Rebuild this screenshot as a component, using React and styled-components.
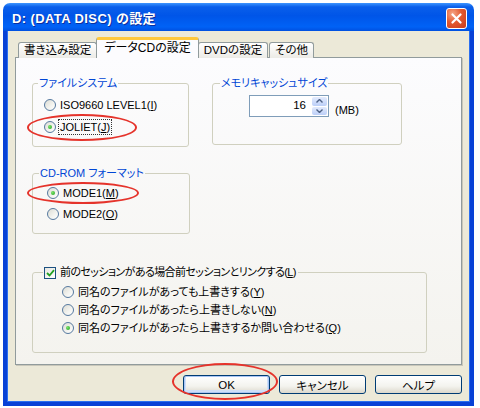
import React from 'react'
import styled, { createGlobalStyle } from 'styled-components'

const GlobalStyle = createGlobalStyle`
  html, body { margin: 0; padding: 0; background: #fff; }
  body {
    font-family: "Liberation Sans", "Noto Sans CJK JP", sans-serif;
    font-size: 11px;
    font-feature-settings: "palt";
    color: #000;
  }
`

const Window = styled.div`
  width: 471px;
  margin: 3px 0 0 3px;
  display: flex;
  flex-direction: column;
`

const TitleBar = styled.div`
  height: 28px;
  box-sizing: border-box;
  padding: 5px 7px 0 9px;
  border-radius: 7px 7px 0 0;
  display: flex;
  align-items: flex-start;
  justify-content: space-between;
  background: linear-gradient(to bottom, #3d95ff 0%, #0a5fea 14%, #0055e8 45%, #0062f6 85%, #0050e0 100%);
`

const Title = styled.div`
  color: #fff;
  font-weight: bold;
  font-size: 13px;
  letter-spacing: 0.4px;
  line-height: 22px;
  text-shadow: 1px 1px 0 #0b2f9e;
`

const CloseButton = styled.div`
  width: 21px;
  height: 21px;
  box-sizing: border-box;
  border: 1px solid #fff;
  border-radius: 3px;
  display: flex;
  align-items: center;
  justify-content: center;
  background: radial-gradient(circle at 30% 25%, #f5a888 0%, #e3592f 45%, #c93c1c 100%);
`

const Client = styled.div`
  background: #ece9d8;
  border: 4px solid #0841d6;
  border-top: none;
  box-shadow: inset 1px 0 0 #2b6ff0, inset -1px 0 0 #2b6ff0, inset 0 -1px 0 #2b6ff0;
  padding: 6px 8px 8px 8px;
  display: flex;
  flex-direction: column;
`

const TabStrip = styled.div`
  display: flex;
  align-items: flex-end;
  height: 21px;
  padding-left: 2px;
  margin-bottom: -1px;
  position: relative;
  z-index: 1;
`

const Tab = styled.div`
  box-sizing: border-box;
  height: ${p => (p.$active ? 21 : 16)}px;
  padding: 0 ${p => (p.$active ? 7 : 5)}px;
  margin: 0 ${p => (p.$active ? -2 : 0)}px 0 ${p => (p.$active ? -1 : 1)}px;
  border: 1px solid #919b9c;
  border-bottom: none;
  border-radius: 3px 3px 0 0;
  line-height: ${p => (p.$active ? 17 : 15)}px;
  white-space: nowrap;
  position: relative;
  z-index: ${p => (p.$active ? 2 : 1)};
  background: ${p => (p.$active ? '#fcfcfe' : 'linear-gradient(to bottom, #ffffff, #ecebe6)')};
  border-top: ${p => (p.$active ? '3px solid #ffc83c' : '1px solid #919b9c')};
  font-size: ${p => (p.$active ? 12 : 11.5)}px;
`

const Panel = styled.div`
  height: 308px;
  box-sizing: border-box;
  border: 1px solid #919b9c;
  box-shadow: 1px 1px 0 #c9c7ba;
  background: linear-gradient(to bottom, #fcfcfe, #f4f3ee);
  padding: 19px 16px 0 16px;
  display: flex;
  flex-direction: column;
`

const Row = styled.div`
  display: flex;
  gap: 23px;
`

const Group = styled.fieldset`
  margin: ${p => p.$top || 0}px 0 0 0;
  padding: 0;
  width: ${p => p.$w}px;
  height: ${p => p.$h}px;
  box-sizing: border-box;
  border: 1px solid #d0d0bf;
  border-radius: 3px;
  min-width: 0;
`

const Legend = styled.legend`
  color: #0046d5;
  padding: 0 1px;
  margin-left: ${p => p.$ml || 5}px;
  line-height: 13px;
  display: flex;
  align-items: center;
  gap: 3px;
`

const GroupBody = styled.div`
  padding: ${p => p.$pad};
  display: flex;
  flex-direction: column;
  gap: ${p => p.$gap || 0}px;
`

const Option = styled.label`
  display: flex;
  align-items: center;
  gap: 3px;
  height: 14px;
  line-height: 14px;
  white-space: nowrap;
  position: relative;
  width: max-content;
`

const Text = styled.span`
  color: #000;
  letter-spacing: ${p => p.$ls || 0}px;
  outline: ${p => (p.$focus ? '1px dotted #333' : 'none')};
  outline-offset: 0;
  padding: 0 1px;
`

const RadioDot = styled.span`
  width: 12px;
  height: 12px;
  box-sizing: border-box;
  border-radius: 50%;
  border: 1px solid #56799f;
  background: linear-gradient(135deg, #dcdcd4 0%, #f4f4f0 60%, #ffffff 100%);
  display: flex;
  align-items: center;
  justify-content: center;
  flex: none;
  &::after {
    content: '';
    width: 4px;
    height: 4px;
    border-radius: 50%;
    background: ${p => (p.$on ? 'radial-gradient(circle at 35% 35%, #7ae36a, #21a121)' : 'transparent')};
  }
`

const CheckBox = styled.span`
  width: 12px;
  height: 12px;
  box-sizing: border-box;
  border: 1px solid #1c5180;
  background: linear-gradient(135deg, #e6e6e0, #ffffff);
  display: flex;
  align-items: center;
  justify-content: center;
  flex: none;
`

const Ring = styled.span`
  position: absolute;
  left: ${p => p.$l}px;
  top: ${p => p.$t}px;
  width: ${p => p.$w}px;
  height: ${p => p.$h}px;
  box-sizing: border-box;
  border: 2px solid #e5332b;
  border-radius: 50%;
  pointer-events: none;
`

const SpinRow = styled.div`
  display: flex;
  align-items: flex-end;
  gap: 6px;
`

const SpinBox = styled.div`
  width: 80px;
  height: 22px;
  box-sizing: border-box;
  border: 1px solid #7f9db9;
  background: #fff;
  display: flex;
`

const SpinValue = styled.div`
  flex: 1;
  text-align: right;
  padding-right: 5px;
  line-height: 18px;
  font-size: 11.5px;
`

const SpinButtons = styled.div`
  width: 15px;
  padding: 1px;
  display: flex;
  flex-direction: column;
  gap: 1px;
`

const SpinButton = styled.div`
  flex: 1;
  border-radius: 2px;
  background: linear-gradient(to bottom, #e3ebfd, #bccff8);
  display: flex;
  align-items: center;
  justify-content: center;
`

const Unit = styled.span`
  line-height: 14px;
`

const Buttons = styled.div`
  display: flex;
  justify-content: flex-end;
  gap: 9px;
  margin-top: 10px;
`

const ButtonWrap = styled.div`
  position: relative;
`

const Button = styled.button`
  width: 87px;
  height: 19px;
  box-sizing: border-box;
  border: 1px solid #003c74;
  border-radius: 3px;
  padding: 0;
  font: inherit;
  font-size: 11.5px;
  color: #000;
  background: linear-gradient(to bottom, #ffffff 0%, #f3f3ee 60%, #dcd8cc 100%);
  box-shadow: ${p => (p.$default ? 'inset 0 0 0 1px #a9c6f4, inset 0 -1px 0 2px #cfdff8' : 'none')};
`

const Radio = ({ on, children, focus }) => (
  <Option>
    <RadioDot $on={on} />
    <Text $focus={focus}>{children}</Text>
  </Option>
)

const Chevron = ({ up }) => (
  <svg width="7" height="4" viewBox="0 0 7 4">
    <polyline
      points={up ? '0.5,3.5 3.5,0.5 6.5,3.5' : '0.5,0.5 3.5,3.5 6.5,0.5'}
      fill="none"
      stroke="#4d6185"
      strokeWidth="1.4"
    />
  </svg>
)

export default function App() {
  return (
    <>
      <GlobalStyle />
      <Window>
        <TitleBar>
          <Title>D: (DATA DISC) の設定</Title>
          <CloseButton>
            <svg width="11" height="11" viewBox="0 0 11 11">
              <path d="M1.5 1.5 L9.5 9.5 M9.5 1.5 L1.5 9.5" stroke="#fff" strokeWidth="2.2" strokeLinecap="round" />
            </svg>
          </CloseButton>
        </TitleBar>
        <Client>
          <TabStrip>
            <Tab>書き込み設定</Tab>
            <Tab $active>データCDの設定</Tab>
            <Tab>DVDの設定</Tab>
            <Tab>その他</Tab>
          </TabStrip>
          <Panel>
            <Row>
              <Group $w={157} $h={70}>
                <Legend>ファイルシステム</Legend>
                <GroupBody $pad="8px 0 0 11px" $gap={8}>
                  <Radio>ISO9660 LEVEL1(<u>I</u>)</Radio>
                  <Option>
                    <RadioDot $on />
                    <Text $focus>JOLIET(<u>J</u>)</Text>
                    <Ring $l={-17} $t={-6} $w={110} $h={27} />
                  </Option>
                </GroupBody>
              </Group>
              <Group $w={190} $h={68}>
                <Legend $ml={7}>メモリキャッシュサイズ</Legend>
                <GroupBody $pad="5px 0 0 36px">
                  <SpinRow>
                    <SpinBox>
                      <SpinValue>16</SpinValue>
                      <SpinButtons>
                        <SpinButton><Chevron up /></SpinButton>
                        <SpinButton><Chevron /></SpinButton>
                      </SpinButtons>
                    </SpinBox>
                    <Unit>(MB)</Unit>
                  </SpinRow>
                </GroupBody>
              </Group>
            </Row>
            <Group $top={20} $w={158} $h={67}>
              <Legend $ml={6}>CD-ROM フォーマット</Legend>
              <GroupBody $pad="6px 0 0 14px" $gap={7}>
                <Option>
                  <RadioDot $on />
                  <Text>MODE1(<u>M</u>)</Text>
                  <Ring $l={-20} $t={-4} $w={112} $h={22} />
                </Option>
                <Radio>MODE2(<u>O</u>)</Radio>
              </GroupBody>
            </Group>
            <Group $top={32} $w={395} $h={87}>
              <Legend $ml={10}>
                <CheckBox>
                  <svg width="9" height="8" viewBox="0 0 9 8">
                    <polyline points="1,4 3.5,6.5 8,1.2" fill="none" stroke="#21a121" strokeWidth="1.8" />
                  </svg>
                </CheckBox>
                <Text $ls={-0.6}>前のセッションがある場合前セッションとリンクする(<u>L</u>)</Text>
              </Legend>
              <GroupBody $pad="6px 0 0 29px" $gap={4}>
                <Radio>同名のファイルがあっても上書きする(<u>Y</u>)</Radio>
                <Radio>同名のファイルがあったら上書きしない(<u>N</u>)</Radio>
                <Radio on>同名のファイルがあったら上書きするか問い合わせる(<u>Q</u>)</Radio>
              </GroupBody>
            </Group>
          </Panel>
          <Buttons>
            <ButtonWrap>
              <Button $default>OK</Button>
              <Ring $l={-11} $t={-12} $w={106} $h={37} />
            </ButtonWrap>
            <Button>キャンセル</Button>
            <Button>ヘルプ</Button>
          </Buttons>
        </Client>
      </Window>
    </>
  )
}
